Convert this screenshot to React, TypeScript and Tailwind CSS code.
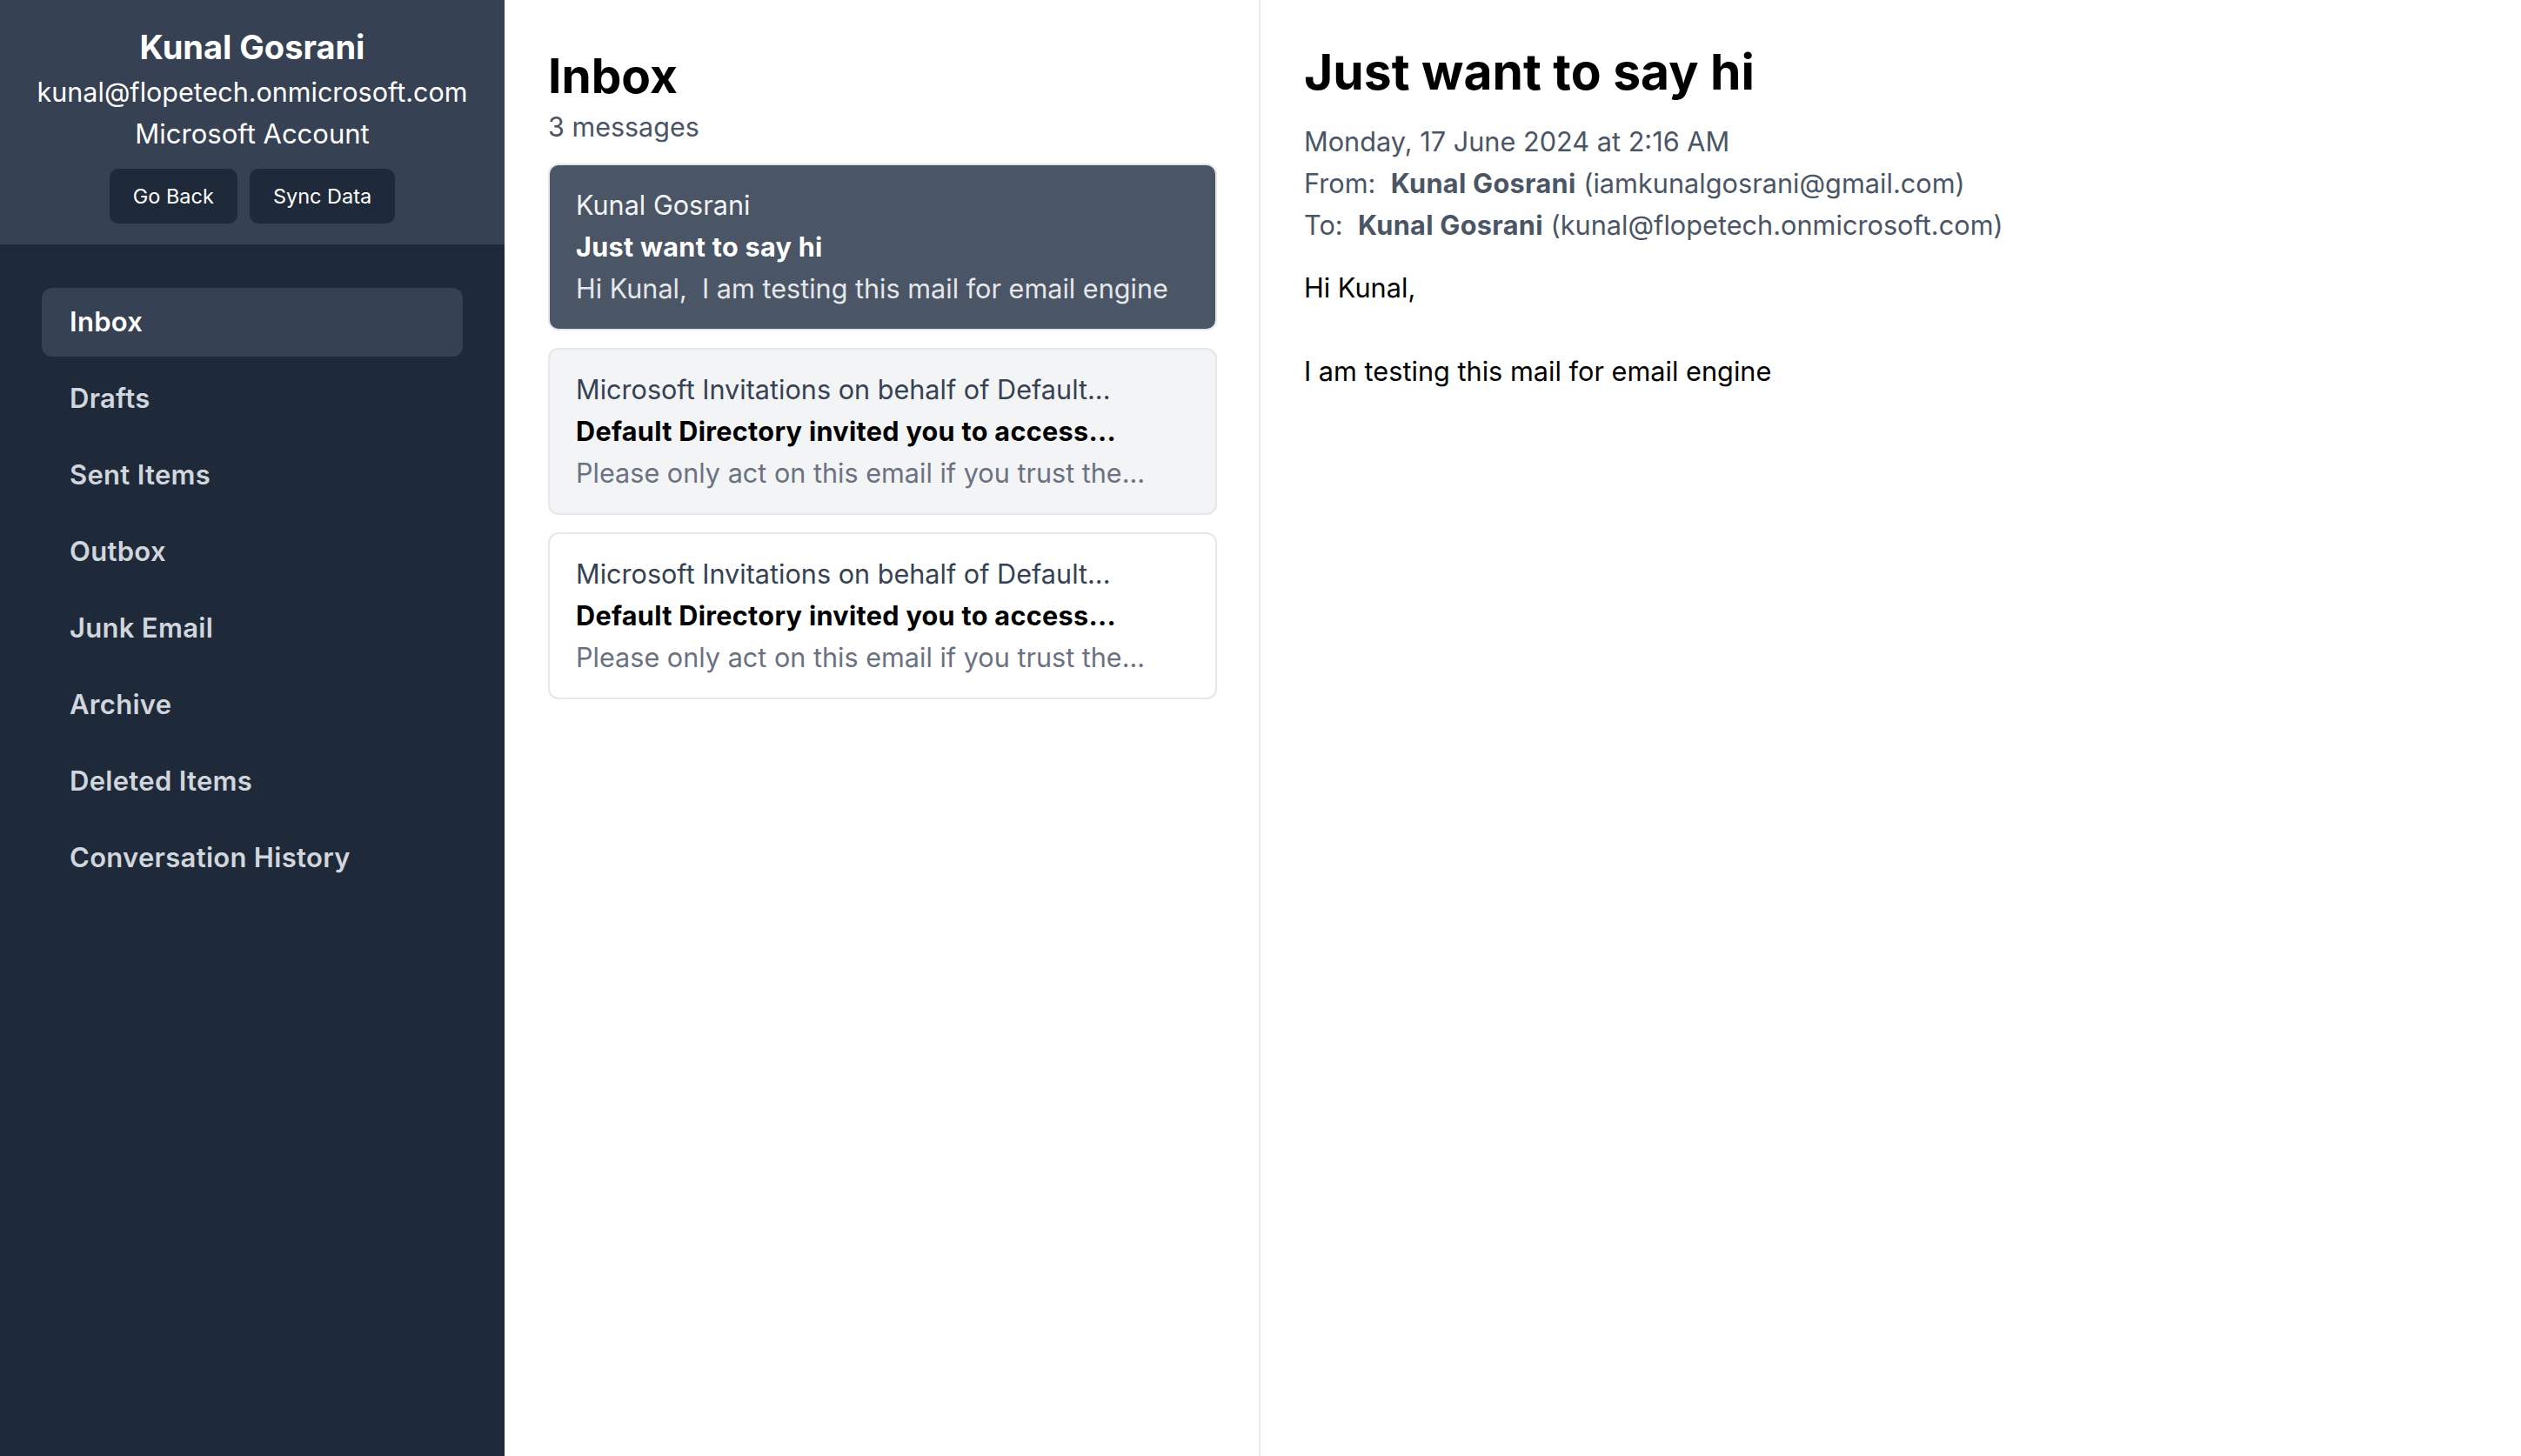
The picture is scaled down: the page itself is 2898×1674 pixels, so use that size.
import { useState } from "react";

type Message = {
  id: number;
  from: string;
  subject: string;
  preview: string;
};

const folders = [
  "Inbox",
  "Drafts",
  "Sent Items",
  "Outbox",
  "Junk Email",
  "Archive",
  "Deleted Items",
  "Conversation History",
];

const messages: Message[] = [
  {
    id: 1,
    from: "Kunal Gosrani",
    subject: "Just want to say hi",
    preview: "Hi Kunal,\u00a0\u00a0I am testing this mail for email engine",
  },
  {
    id: 2,
    from: "Microsoft Invitations on behalf of Default...",
    subject: "Default Directory invited you to access...",
    preview: "Please only act on this email if you trust the...",
  },
  {
    id: 3,
    from: "Microsoft Invitations on behalf of Default...",
    subject: "Default Directory invited you to access...",
    preview: "Please only act on this email if you trust the...",
  },
];

export default function App() {
  const [folder, setFolder] = useState("Inbox");
  const [selected, setSelected] = useState(1);

  return (
    <div className="flex h-screen w-full overflow-hidden bg-white font-['Inter',sans-serif]">
      {/* Sidebar */}
      <aside className="flex w-[580px] shrink-0 flex-col bg-gray-800">
        <div className="flex flex-col items-center bg-gray-700 pt-[26px] pb-[24px] text-white">
          <h1 className="text-[38px] leading-[56px] font-bold">Kunal Gosrani</h1>
          <p className="text-[30.5px] leading-[48px]">kunal@flopetech.onmicrosoft.com</p>
          <p className="text-[31px] leading-[48px]">Microsoft Account</p>
          <div className="mt-[16px] flex gap-[14px]">
            <button className="h-[63px] rounded-[10px] bg-gray-800 px-[27px] text-[23.5px] text-white">
              Go Back
            </button>
            <button className="h-[63px] rounded-[10px] bg-gray-800 px-[27px] text-[23.5px] text-white">
              Sync Data
            </button>
          </div>
        </div>

        <nav className="flex flex-col gap-[9px] px-[48px] pt-[50px]">
          {folders.map((name) => (
            <button
              key={name}
              onClick={() => setFolder(name)}
              className={`h-[79px] rounded-[12px] pl-[32px] text-left text-[31px] font-semibold tracking-[0.3px] ${
                folder === name ? "bg-gray-700 text-white" : "text-gray-300"
              }`}
            >
              {name}
            </button>
          ))}
        </nav>
      </aside>

      {/* Message list */}
      <section className="flex w-[869px] shrink-0 flex-col border-r-2 border-gray-200 pt-[54px] pr-[48px] pl-[50px]">
        <h2 className="text-[55px] leading-[66px] font-bold text-black">Inbox</h2>
        <p className="mt-[2px] text-[30.5px] leading-[48px] text-gray-600">3 messages</p>
        <div className="mt-[18px] flex flex-col gap-[20px]">
          {messages.map((m) => {
            const active = m.id === selected;
            const hovered = m.id === 2;
            return (
              <div
                key={m.id}
                onClick={() => setSelected(m.id)}
                className={`cursor-pointer rounded-[12px] border-2 px-[30px] py-[22px] text-[30.6px] leading-[48px] ${
                  active
                    ? "border-gray-200 bg-gray-600"
                    : hovered
                    ? "border-gray-200 bg-gray-100"
                    : "border-gray-200 bg-white"
                }`}
              >
                <p className={active ? "text-gray-100" : "text-gray-700"}>{m.from}</p>
                <p className={`font-bold tracking-[0.3px] ${active ? "text-white" : "text-black"}`}>{m.subject}</p>
                <p className={active ? "text-gray-200" : "text-gray-500"}>{m.preview}</p>
              </div>
            );
          })}
        </div>
      </section>

      {/* Reading pane */}
      <main className="flex flex-1 flex-col px-[50px] pt-[50px]">
        <h2 className="text-[57px] leading-[66px] font-bold text-black">Just want to say hi</h2>
        <div className="mt-[23px] text-[30.7px] leading-[48px] text-gray-600">
          <p>Monday, 17 June 2024 at 2:16 AM</p>
          <p>
            From:&nbsp; <span className="font-bold tracking-[0.3px]">Kunal Gosrani</span> (iamkunalgosrani@gmail.com)
          </p>
          <p>
            To:&nbsp; <span className="font-bold tracking-[0.3px]">Kunal Gosrani</span> (kunal@flopetech.onmicrosoft.com)
          </p>
        </div>
        <div className="mt-[24px] text-[30.7px] leading-[48px] text-black">
          <p>Hi Kunal,</p>
          <br />
          <p>I am testing this mail for email engine</p>
        </div>
      </main>
    </div>
  );
}
